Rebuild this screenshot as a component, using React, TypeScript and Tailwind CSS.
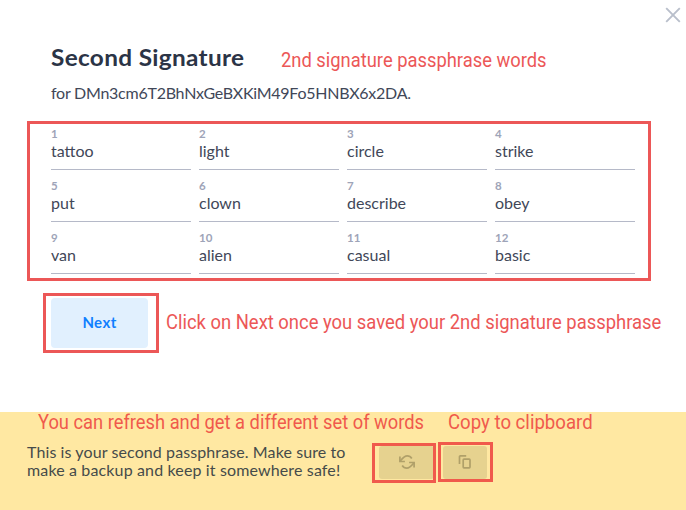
const words = [
  "tattoo", "light", "circle", "strike",
  "put", "clown", "describe", "obey",
  "van", "alien", "casual", "basic",
];

function RefreshIcon() {
  return (
    <svg width="18" height="16" viewBox="0 0 18 16" fill="none" stroke="#b0a069" strokeWidth="1.7">
      <path d="M2.2 7.2C4.6 4.2 6.2 1.9 9.2 1.9c1.9 0 3.6.9 4.6 2.6" />
      <path d="M1.9 2.4v5.1h5" />
      <path d="M15.8 8.8C13.4 11.8 11.8 14.1 8.8 14.1c-1.9 0-3.6-.9-4.6-2.6" />
      <path d="M16.1 13.6V8.5h-5" />
    </svg>
  );
}

function CopyIcon() {
  return (
    <svg width="14" height="16" viewBox="0 0 14 16" fill="none" stroke="#b0a069" strokeWidth="1.7" strokeLinejoin="round">
      <path d="M1.5 10V2.7q0-.9.9-.9H8.2" />
      <rect x="5.2" y="5.2" width="6.8" height="8.6" rx="0.8" />
    </svg>
  );
}

export default function App() {
  return (
    <div className="relative flex h-[510px] w-[686px] flex-col overflow-hidden bg-white font-['Lato',sans-serif] text-[#414758]">
      <header className="flex h-[43px] justify-end pt-[7px] pr-[5px]">
        <button className="h-4 w-4" aria-label="Close">
          <svg width="16" height="16" viewBox="0 0 16 16" stroke="#b9bfcb" strokeWidth="1.9">
            <path d="M1.2 1.2l13.6 13.6M14.8 1.2L1.2 14.8" />
          </svg>
        </button>
      </header>

      <main className="flex h-[369px] flex-col pl-[51px]">
        <h1 className="origin-left scale-x-[1.06] text-[23px] leading-[28px] font-bold tracking-[0.3px] text-[#2b3446]">
          Second Signature
        </h1>
        <p className="mt-[12px] text-[16px] leading-[20px] tracking-[-0.25px]">
          for DMn3cm6T2BhNxGeBXKiM49Fo5HNBX6x2DA.
        </p>
        <ol className="mt-[15px] grid w-[584px] grid-cols-4 gap-x-2">
          {words.map((word, i) => (
            <li key={word} className="flex h-[52px] flex-col border-b border-[#b5b9c8] pt-[10px]">
              <span className="text-[11.5px] leading-[12px] font-bold text-[#9ea4b8]">{i + 1}</span>
              <span className="mt-px text-[16px] leading-[20px]">{word}</span>
            </li>
          ))}
        </ol>
        <button className="mt-6 h-[50px] w-[97px] rounded-[4px] bg-[#e1f0fe] pb-[2px] text-[15px] font-bold tracking-[0.4px] text-[#0f7fff]">
          Next
        </button>
      </main>

      <footer className="flex h-[98px] bg-[#ffe8a2] pl-[27px] text-[#454b4a]">
        <p className="mt-[31px] w-[352px] text-[16px] leading-[18px] tracking-[0.1px] whitespace-nowrap">
          This is your second passphrase. Make sure to
          <br />
          <span className="tracking-[0.14px]">make a backup and keep it somewhere safe!</span>
        </p>
        <button className="mt-[34px] flex h-[33px] w-[55px] items-center justify-center rounded-[3px] bg-[#e6d28f] pb-px" aria-label="Refresh">
          <RefreshIcon />
        </button>
        <button className="mt-[34px] ml-[9px] flex h-[33px] w-[44px] items-center justify-center rounded-[3px] bg-[#e6d28f] pb-px" aria-label="Copy">
          <CopyIcon />
        </button>
      </footer>

      <div className="absolute top-[121px] left-[27px] h-[160px] w-[624px] border-3 border-[#ec5757]" />
      <div className="absolute top-[293px] left-[43px] h-[60px] w-[116px] border-3 border-[#ec5757]" />
      <div className="absolute top-[443px] left-[372px] h-[40px] w-[64px] border-3 border-[#f05a4c]" />
      <div className="absolute top-[442px] left-[438px] h-[40px] w-[55px] border-3 border-[#f05a4c]" />

      <div className="font-['Roboto',sans-serif] text-[21px] leading-[24px] whitespace-nowrap text-[#ec5757]">
        <span className="absolute top-[48px] left-[281px] origin-left scale-x-[0.874]">2nd signature passphrase words</span>
        <span className="absolute top-[310px] left-[166px] origin-left scale-x-[0.877]">Click on Next once you saved your 2nd signature passphrase</span>
        <span className="absolute top-[410px] left-[38px] origin-left scale-x-[0.872] text-[#f05a4c]">You can refresh and get a different set of words</span>
        <span className="absolute top-[410px] left-[448px] origin-left scale-x-[0.886] text-[#f05a4c]">Copy to clipboard</span>
      </div>
    </div>
  );
}
